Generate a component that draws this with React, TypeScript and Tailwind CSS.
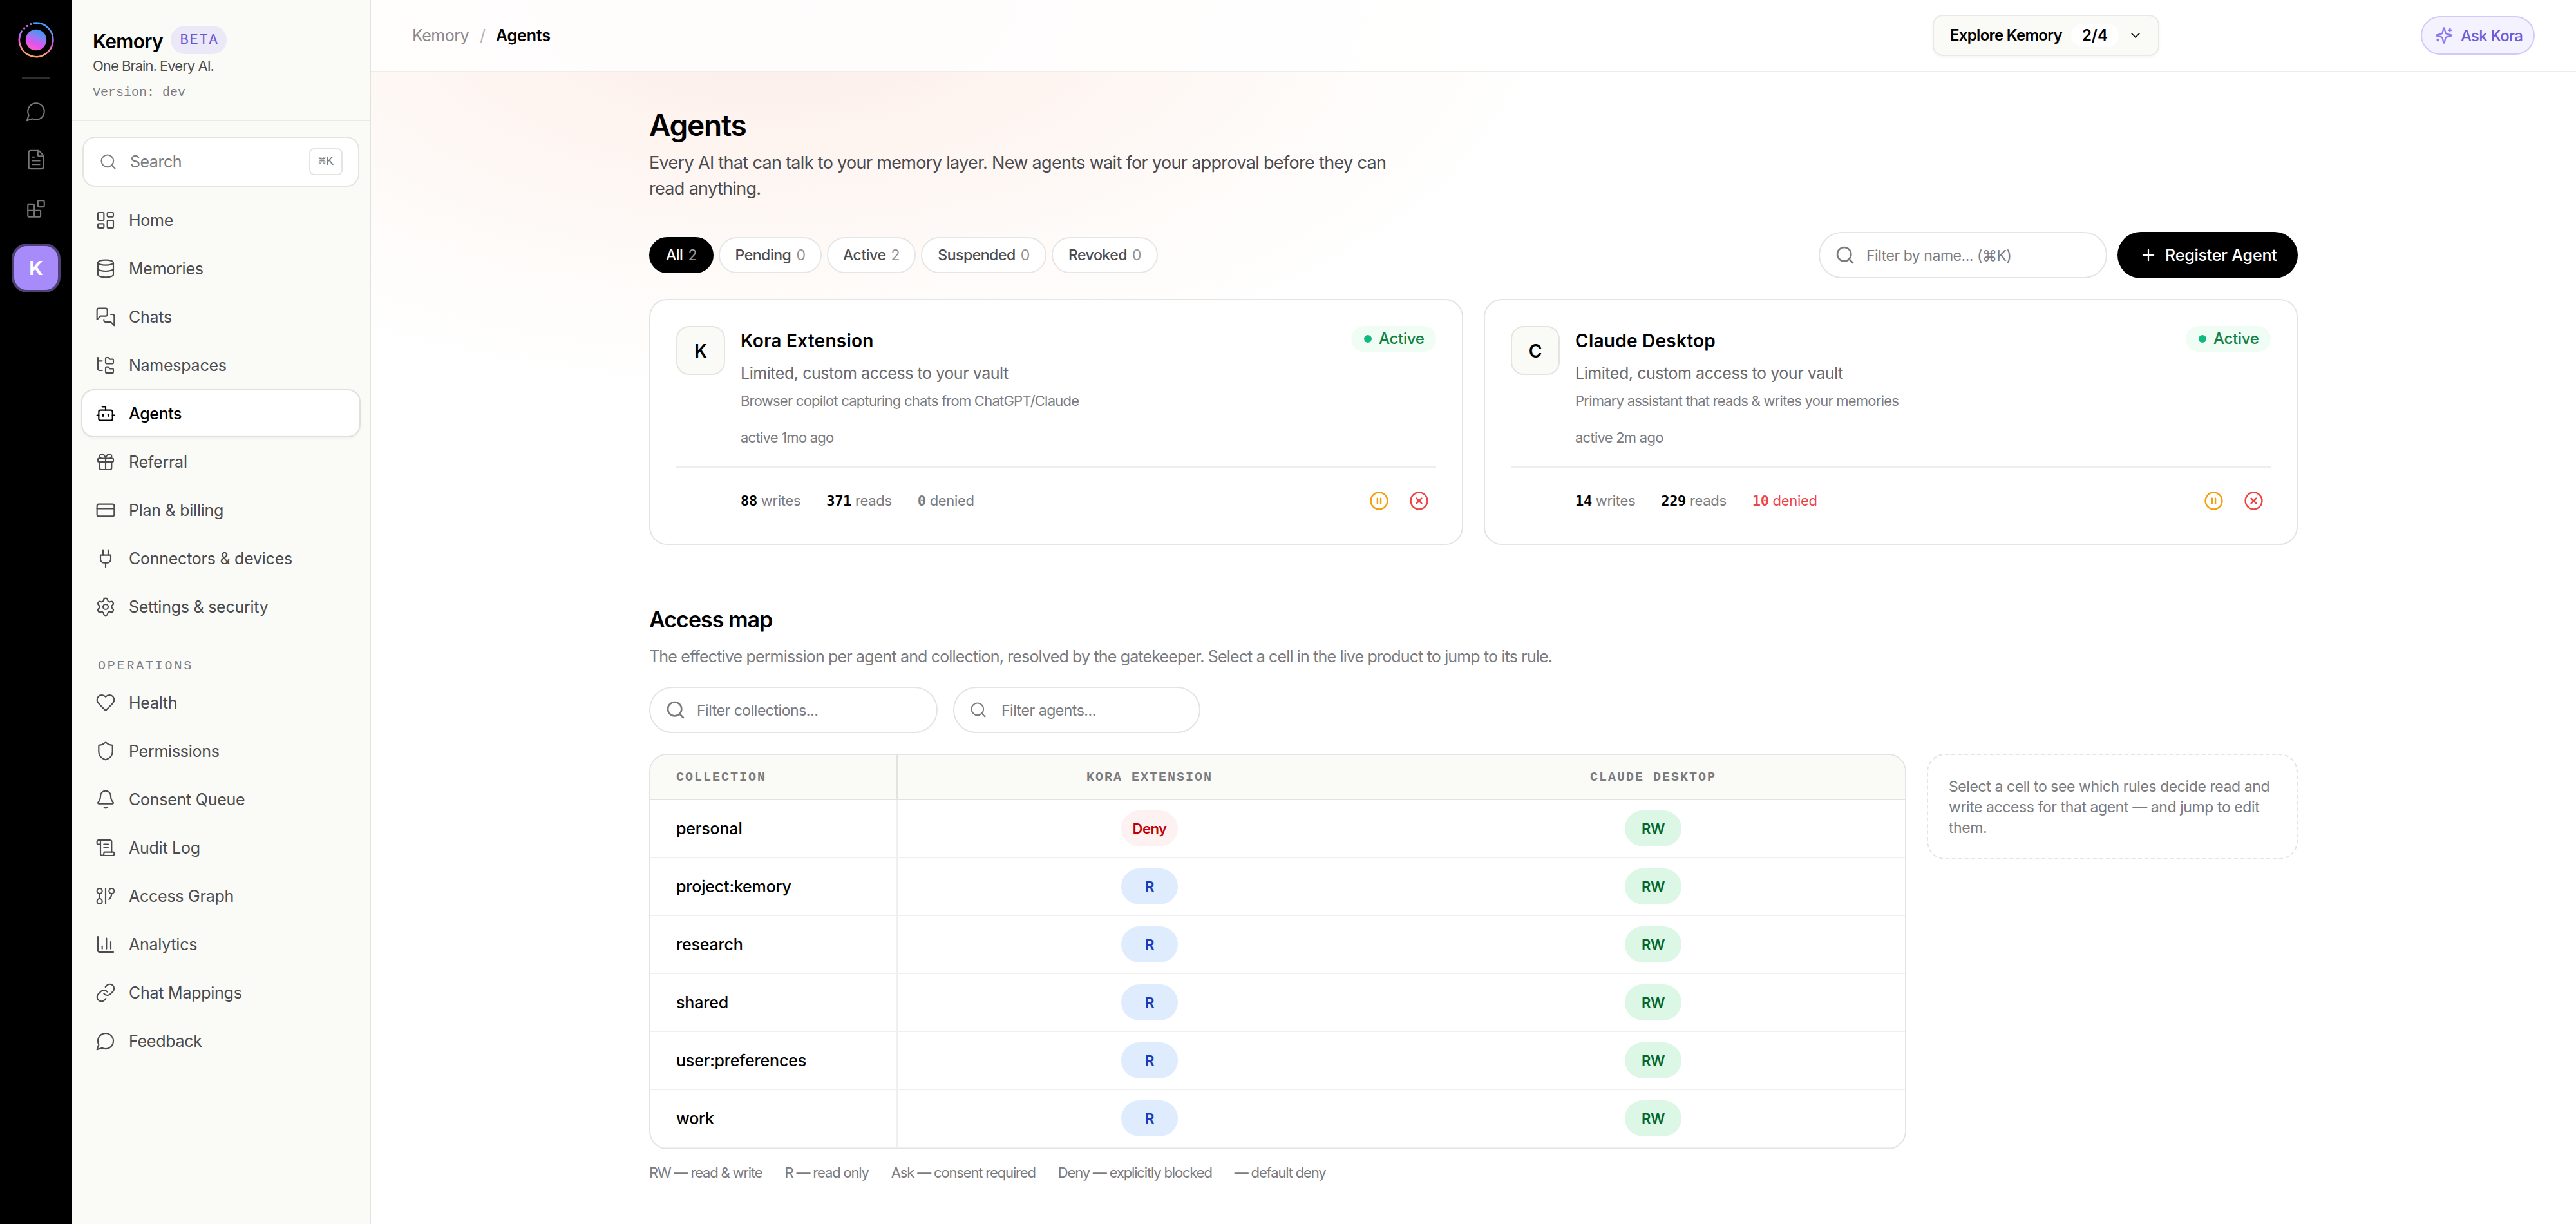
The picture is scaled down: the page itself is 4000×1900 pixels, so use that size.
import React from 'react';
import clsx from 'clsx';
import {
  Bell,
  Bot,
  ChartColumn,
  ChevronDown,
  CirclePause,
  CircleX,
  CreditCard,
  Database,
  FileText,
  FolderTree,
  Gift,
  GitGraph,
  LayoutDashboard,
  Link,
  Plus,
  ScrollText,
  Search,
  Settings,
  Shield,
} from 'lucide-react';

type IconProps = { size?: number; strokeWidth?: number; className?: string };
type IconType = React.ComponentType<IconProps>;

const glyph = (...paths: string[]): IconType => {
  const Glyph = ({ size = 24, strokeWidth = 2, className }: IconProps) => (
    <svg
      width={size}
      height={size}
      viewBox="0 0 24 24"
      fill="none"
      stroke="currentColor"
      strokeWidth={strokeWidth}
      strokeLinecap="round"
      strokeLinejoin="round"
      className={className}
    >
      {paths.map((d) => (
        <path key={d} d={d} />
      ))}
    </svg>
  );
  return Glyph;
};

const MessageIcon = glyph('M7.9 20A9 9 0 1 0 4 16.1L2 22Z');
const ChatsIcon = glyph(
  'M14 9a2 2 0 0 1-2 2H6l-4 4V4a2 2 0 0 1 2-2h8a2 2 0 0 1 2 2z',
  'M18 9h2a2 2 0 0 1 2 2v11l-4-4h-6a2 2 0 0 1-2-2v-1'
);
const BlocksIcon = glyph(
  'M15 3h5a1 1 0 0 1 1 1v5a1 1 0 0 1-1 1h-5a1 1 0 0 1-1-1V4a1 1 0 0 1 1-1z',
  'M10 21V8a1 1 0 0 0-1-1H4a1 1 0 0 0-1 1v12a1 1 0 0 0 1 1h12a1 1 0 0 0 1-1v-5a1 1 0 0 0-1-1H3'
);
const PlugIcon = glyph('M12 22v-5', 'M9 8V2', 'M15 8V2', 'M18 8v5a4 4 0 0 1-4 4h-4a4 4 0 0 1-4-4V8Z');
const HeartIcon = glyph(
  'M19 14c1.49-1.46 3-3.21 3-5.5A5.5 5.5 0 0 0 16.5 3c-1.76 0-3 .5-4.5 2-1.5-1.5-2.74-2-4.5-2A5.5 5.5 0 0 0 2 8.5c0 2.3 1.5 4.05 3 5.5l7 7Z'
);
const SparklesIcon = glyph(
  'M9.937 15.5A2 2 0 0 0 8.5 14.063l-6.135-1.582a.5.5 0 0 1 0-.962L8.5 9.936A2 2 0 0 0 9.937 8.5l1.582-6.135a.5.5 0 0 1 .963 0L14.063 8.5A2 2 0 0 0 15.5 9.937l6.135 1.581a.5.5 0 0 1 0 .964L15.5 14.063a2 2 0 0 0-1.437 1.437l-1.582 6.135a.5.5 0 0 1-.963 0z',
  'M20 3v4',
  'M22 5h-4',
  'M4 17v2',
  'M5 18H3'
);

interface NavEntry {
  label: string;
  icon: IconType;
  active?: boolean;
}

const mainNav: NavEntry[] = [
  { label: 'Home', icon: LayoutDashboard },
  { label: 'Memories', icon: Database },
  { label: 'Chats', icon: ChatsIcon },
  { label: 'Namespaces', icon: FolderTree },
  { label: 'Agents', icon: Bot, active: true },
  { label: 'Referral', icon: Gift },
  { label: 'Plan & billing', icon: CreditCard },
  { label: 'Connectors & devices', icon: PlugIcon },
  { label: 'Settings & security', icon: Settings },
];

const opsNav: NavEntry[] = [
  { label: 'Health', icon: HeartIcon },
  { label: 'Permissions', icon: Shield },
  { label: 'Consent Queue', icon: Bell },
  { label: 'Audit Log', icon: ScrollText },
  { label: 'Access Graph', icon: GitGraph },
  { label: 'Analytics', icon: ChartColumn },
  { label: 'Chat Mappings', icon: Link },
  { label: 'Feedback', icon: MessageIcon },
];

const filters = [
  { label: 'All', count: 2, width: 'w-[100px]', active: true },
  { label: 'Pending', count: 0, width: 'w-[160px]' },
  { label: 'Active', count: 2, width: 'w-[138px]' },
  { label: 'Suspended', count: 0, width: 'w-[195px]' },
  { label: 'Revoked', count: 0, width: 'w-[165px]' },
];

interface Agent {
  name: string;
  about: string;
  seen: string;
  writes: number;
  reads: number;
  denied: number;
}

const agents: Agent[] = [
  {
    name: 'Kora Extension',
    about: 'Browser copilot capturing chats from ChatGPT/Claude',
    seen: 'active 1mo ago',
    writes: 88,
    reads: 371,
    denied: 0,
  },
  {
    name: 'Claude Desktop',
    about: 'Primary assistant that reads & writes your memories',
    seen: 'active 2m ago',
    writes: 14,
    reads: 229,
    denied: 10,
  },
];

const accessRows = [
  { name: 'personal', access: ['Deny', 'RW'] },
  { name: 'project:kemory', access: ['R', 'RW'] },
  { name: 'research', access: ['R', 'RW'] },
  { name: 'shared', access: ['R', 'RW'] },
  { name: 'user:preferences', access: ['R', 'RW'] },
  { name: 'work', access: ['R', 'RW'] },
];

const pillColors: Record<string, string> = {
  Deny: 'bg-[#fef1f1] text-[#c10007]',
  R: 'bg-[#dfecfe] text-[#193cb8]',
  RW: 'bg-[#dcf7e5] text-[#016630]',
};

const legend = [
  'RW — read & write',
  'R — read only',
  'Ask — consent required',
  'Deny — explicitly blocked',
  '— default deny',
];

const Logo: React.FC = () => (
  <svg width="56" height="56" viewBox="0 0 56 56" fill="none">
    <defs>
      <linearGradient id="ring" x1="34" y1="0" x2="24" y2="56" gradientUnits="userSpaceOnUse">
        <stop stopColor="#3b9eff" />
        <stop offset="0.28" stopColor="#7f8dfa" />
        <stop offset="0.55" stopColor="#e956f0" />
        <stop offset="0.8" stopColor="#fb8a8f" />
        <stop offset="1" stopColor="#ffa64d" />
      </linearGradient>
      <linearGradient id="core" x1="36" y1="12" x2="22" y2="44" gradientUnits="userSpaceOnUse">
        <stop stopColor="#2f9bf5" />
        <stop offset="0.35" stopColor="#8581f3" />
        <stop offset="0.72" stopColor="#e94ff0" />
        <stop offset="1" stopColor="#f56ab4" />
      </linearGradient>
    </defs>
    <path d="M25 1.9A26.2 26.2 0 1 1 5.6 14.6" stroke="url(#ring)" strokeWidth="2.6" strokeLinecap="round" />
    <circle cx="28" cy="28" r="16.2" fill="url(#core)" />
    <circle cx="19.8" cy="3.6" r="1.5" fill="#a97df6" />
    <circle cx="14.2" cy="6.4" r="1.6" fill="#c46df4" />
    <circle cx="9.6" cy="10" r="1.7" fill="#de5ff1" />
  </svg>
);

const NavItem: React.FC<NavEntry> = ({ label, icon: Icon, active }) => (
  <div
    className={clsx(
      'flex h-[75px] items-center gap-5 rounded-[20px] border-2 pl-5 text-[25px]',
      active
        ? 'border-[#e0e0dc] bg-white font-medium tracking-[-0.016em] text-black shadow-[0_2px_4px_rgba(0,0,0,0.04)]'
        : 'border-transparent tracking-[-0.01em] text-[#4b4b50]'
    )}
  >
    <Icon size={32} strokeWidth={1.6} />
    <span className="pt-0.5">{label}</span>
  </div>
);

const Rail: React.FC = () => (
  <div className="flex w-28 shrink-0 flex-col items-center bg-black pt-[34px] text-[#77777b]">
    <Logo />
    <div className="mt-[30px] h-0.5 w-11 bg-[#2e2e2e]" />
    <MessageIcon size={34} strokeWidth={1.5} className="mt-[34px]" />
    <FileText size={34} strokeWidth={1.5} className="mt-[41px]" />
    <BlocksIcon size={34} strokeWidth={1.5} className="mt-[42px]" />
    <div className="mt-[37px] flex size-[76px] items-center justify-center rounded-[24px] border-4 border-[#4f4175] bg-[#a78bfa] text-[30px] font-bold text-white">
      K
    </div>
  </div>
);

const Sidebar: React.FC = () => (
  <div className="w-[464px] shrink-0 border-r-2 border-[#e2e2de] bg-[#fafbf7]">
    <div className="flex h-[188px] flex-col border-b-2 border-[#e9e9e6] pt-10 pl-8">
      <div className="flex h-11 items-center gap-3">
        <span className="pt-1 text-[30px] font-semibold tracking-[-0.022em] text-black">Kemory</span>
        <span className="flex h-11 w-[87px] items-center justify-center rounded-full bg-[#ebe8f8] pl-0.5 font-['Liberation_Mono',monospace] text-[22px] tracking-[0.08em] text-[#6e56cf]">
          BETA
        </span>
      </div>
      <div className="mt-0.5 text-[22px] leading-8 tracking-[-0.044em] text-[#4b4b50]">One Brain. Every AI.</div>
      <div className="mt-3 font-['Liberation_Mono',monospace] text-xl leading-7 text-[#7b7b80]">Version: dev</div>
    </div>
    <div className="px-3.5 pt-6">
      <div className="mx-0.5 flex h-[78px] items-center rounded-[20px] border-2 border-[#e4e4e2] bg-white pr-6 pl-6 text-[#7b7b80]">
        <Search size={28} strokeWidth={1.75} />
        <span className="ml-5 pt-0.5 text-[25px] tracking-[-0.02em]">Search</span>
        <span className="ml-auto flex h-[42px] w-[52px] items-center justify-center rounded-lg border-2 border-[#e4e4e2] font-['Liberation_Mono','DejaVu_Sans_Mono',monospace] text-xl">
          ⌘K
        </span>
      </div>
      <div className="mt-3.5">
        {mainNav.map((item) => (
          <NavItem key={item.label} {...item} />
        ))}
      </div>
      <div className="flex h-[74px] items-center pt-9 pl-[26px] font-['Liberation_Mono',monospace] text-xl tracking-[0.14em] text-[#7b7b80]">
        OPERATIONS
      </div>
      {opsNav.map((item) => (
        <NavItem key={item.label} {...item} />
      ))}
    </div>
  </div>
);

const Header: React.FC = () => (
  <div className="flex h-28 items-center border-b-2 border-[#ededec] bg-white/85 px-16 text-[25px]">
    <div className="flex pt-0.5">
      <span className="tracking-[-0.021em] text-[#8a8a8e]">Kemory</span>
      <span className="ml-[17px] text-[#b4b4b6]">/</span>
      <span className="ml-4 font-semibold tracking-[-0.008em] text-black">Agents</span>
    </div>
    <div className="mr-[406px] ml-auto flex h-16 w-[352px] items-center rounded-2xl border-2 border-[#e9e9e6] bg-[#fafbf7] pl-[25px] text-2xl font-semibold text-black shadow-[0_2px_4px_rgba(0,0,0,0.04)]">
      <span className="tracking-[-0.029em]">Explore Kemory</span>
      <span className="ml-3.5 flex h-9 w-[74px] items-center justify-center rounded-full bg-white">2/4</span>
      <ChevronDown size={24} strokeWidth={1.75} className="ml-3.5" />
    </div>
    <div className="flex h-[60px] w-[177px] items-center rounded-full border-2 border-[#d3c8fb] bg-[#f4f2fe] pl-5 text-2xl font-[450] tracking-[-0.034em] text-[#6e5bd6]">
      <SparklesIcon size={28} className="text-[#8b78f0]" />
      <span className="ml-3 pt-0.5">Ask Kora</span>
    </div>
  </div>
);

const SearchPill: React.FC<{ text: string; className: string; iconSize?: number; thin?: boolean }> = ({
  text,
  className,
  iconSize = 32,
  thin,
}) => (
  <div
    className={clsx(
      'flex h-[72px] items-center rounded-full border-2 border-[#e4e4e4] bg-white pl-[23px] text-[23px] tracking-[-0.02em] text-[#7b7b80]',
      className
    )}
  >
    <Search size={iconSize} strokeWidth={thin ? 1.75 : 2} />
    <span className={thin ? 'ml-[22px] pt-0.5' : 'ml-[17px] pt-0.5'}>{text}</span>
  </div>
);

const Stat: React.FC<{ value: number; label: string; tone?: string }> = ({ value, label, tone = 'text-black' }) => (
  <span className={clsx('flex items-baseline gap-1.5', tone === 'text-[#ef4444]' ? tone : 'text-[#7b7b80]')}>
    <b className={clsx("font-['DejaVu_Sans_Mono',monospace] text-[22px] font-bold", tone)}>{value}</b>
    {label}
  </span>
);

const AgentCard: React.FC<{ agent: Agent }> = ({ agent }) => (
  <div className="h-[382px] flex-1 rounded-[28px] border-2 border-[#e4e4e4] bg-white p-10">
    <div className="flex h-[218px] items-start gap-6">
      <div className="flex size-[76px] items-center justify-center rounded-[20px] border-2 border-[#e4e4e0] bg-[#fafbf7] pt-0.5 text-[28px] font-semibold text-black">
        {agent.name[0]}
      </div>
      <div className="pt-[3px] text-[22px] text-[#7b7b80]">
        <div className="text-[28px] leading-10 font-semibold tracking-[0.009em] text-black">{agent.name}</div>
        <div className="mt-3 text-[25px] leading-9 tracking-[-0.018em] text-[#6b6b6e]">
          Limited, custom access to your vault
        </div>
        <div className="mt-[9px] leading-8 tracking-[-0.035em]">{agent.about}</div>
        <div className="mt-[25px] leading-8 tracking-[-0.034em]">{agent.seen}</div>
      </div>
      <div className="ml-auto flex h-10 w-[132px] items-center rounded-full bg-[#f0fdf4] pl-5 text-2xl font-[450] tracking-[-0.012em] text-[#138043]">
        <span className="mr-[11px] size-3 rounded-full bg-[#10b981]" />
        Active
      </div>
    </div>
    <div className="flex h-20 items-center gap-10 border-t-2 border-[#eeeeed] pt-6 pl-[100px] text-[22px] tracking-[-0.015em]">
      <Stat value={agent.writes} label="writes" />
      <Stat value={agent.reads} label="reads" />
      <Stat
        value={agent.denied}
        label="denied"
        tone={agent.denied > 0 ? 'text-[#ef4444]' : 'text-[#7b7b80]'}
      />
      <div className="ml-auto flex gap-2">
        <div className="flex size-[54px] items-center justify-center text-[#f59e0b]">
          <CirclePause size={31} strokeWidth={1.9} />
        </div>
        <div className="flex size-[54px] items-center justify-center text-[#ef4444]">
          <CircleX size={31} strokeWidth={1.9} />
        </div>
      </div>
    </div>
  </div>
);

const AccessTable: React.FC = () => (
  <div className="w-[1952px] overflow-hidden rounded-[28px] border-2 border-[#e4e4e4] bg-white">
    <div className="flex h-[70px] border-b-2 border-[#e2e2de] bg-[#fafbf7] font-['Liberation_Mono',monospace] text-xl font-bold tracking-[0.1em] text-[#7b7b80]">
      <div className="flex w-96 items-center border-r-2 border-[#e2e2de] pt-0.5 pl-10">COLLECTION</div>
      <div className="flex flex-1 items-center justify-center pt-0.5">KORA EXTENSION</div>
      <div className="flex flex-1 items-center justify-center pt-0.5">CLAUDE DESKTOP</div>
    </div>
    {accessRows.map((row) => (
      <div key={row.name} className="flex h-[90px] border-b-2 border-[#efefef]">
        <div className="flex w-96 items-center border-r-2 border-[#efefef] pt-0.5 pl-10 text-[25px] font-[450] tracking-[-0.007em] text-black">
          {row.name}
        </div>
        {row.access.map((level, i) => (
          <div key={i} className="flex flex-1 items-center justify-center">
            <span
              className={clsx(
                'flex h-14 w-[88px] items-center justify-center rounded-full text-[22px] font-semibold tracking-[-0.022em]',
                pillColors[level]
              )}
            >
              {level}
            </span>
          </div>
        ))}
      </div>
    ))}
  </div>
);

const App: React.FC = () => {
  return (
    <div className="flex h-[1900px] w-[4000px] overflow-hidden bg-white font-['Inter','Liberation_Sans',sans-serif]">
      <Rail />
      <Sidebar />
      <div className="flex-1 bg-[radial-gradient(ellipse_1240px_620px_at_1200px_0,#fbebe7,#fef5f1_40%,#fefbf9_72%,#ffffff)] bg-fixed">
        <Header />
        <div className="mx-auto w-[2560px] pt-[54px]">
          <h1 className="text-[46px] leading-14 font-semibold tracking-[-0.027em] text-black">Agents</h1>
          <p className="mt-[11px] w-[1180px] text-[27px] leading-10 tracking-[-0.025em] text-[#4b4b50]">
            Every AI that can talk to your memory layer. New agents wait for your approval before they can read anything.
          </p>

          <div className="mt-[47px] flex items-center">
            <div className="flex gap-2">
              {filters.map((filter) => (
                <div
                  key={filter.label}
                  className={clsx(
                    'flex h-14 items-center justify-center gap-2 rounded-full border-2 text-[23px] font-[450] tracking-[-0.02em]',
                    filter.width,
                    filter.active ? 'border-black bg-black text-white' : 'border-[#e6e6e6] bg-white text-[#4b4b50]'
                  )}
                >
                  {filter.label}
                  <span className="font-normal opacity-60">{filter.count}</span>
                </div>
              ))}
            </div>
            <SearchPill text="Filter by name... (⌘K)" className="ml-auto w-[448px]" />
            <div className="ml-4 flex h-[72px] w-[280px] items-center rounded-full bg-black pl-[34px] text-[25px] font-[450] tracking-[-0.008em] text-white">
              <Plus size={28} strokeWidth={1.9} />
              <span className="ml-3 pt-0.5">Register Agent</span>
            </div>
          </div>

          <div className="mt-8 flex gap-8">
            {agents.map((agent) => (
              <AgentCard key={agent.name} agent={agent} />
            ))}
          </div>

          <h2 className="mt-[94px] text-[34px] leading-11 font-semibold tracking-[-0.029em] text-black">Access map</h2>
          <p className="mt-[17px] text-[25px] leading-9 tracking-[-0.0335em] text-[#7b7b80]">
            The effective permission per agent and collection, resolved by the gatekeeper. Select a cell in the live
            product to jump to its rule.
          </p>
          <div className="mt-[29px] flex gap-6">
            <SearchPill text="Filter collections..." className="w-[448px]" />
            <SearchPill text="Filter agents..." className="w-96" iconSize={28} thin />
          </div>

          <div className="mt-8 flex items-start gap-8">
            <AccessTable />
            <div className="h-[164px] w-[576px] rounded-[28px] border-2 border-dashed border-[#e4e4e4] px-8 pt-[33px] text-[23px] leading-8 tracking-[-0.018em] text-[#7b7b80]">
              Select a cell to see which rules decide read and write access for that agent — and jump to edit them.
            </div>
          </div>
          <div className="mt-5 flex gap-[35px] text-[22px] leading-8 tracking-[-0.053em] text-[#7b7b80]">
            {legend.map((entry) => (
              <span key={entry}>{entry}</span>
            ))}
          </div>
        </div>
      </div>
    </div>
  );
};

export default App;
